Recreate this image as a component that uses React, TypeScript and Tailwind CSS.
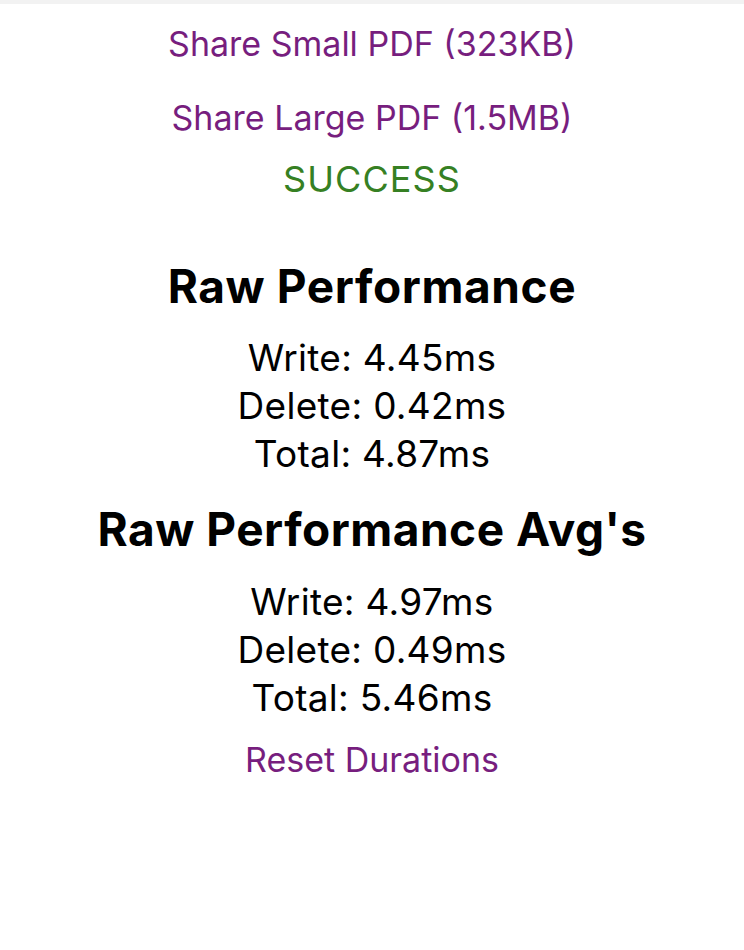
export default function App() {
  return (
    <div className="min-h-[950px] w-[744px] bg-white font-['Inter','Liberation_Sans',sans-serif] text-black">
      <div className="h-[4px] bg-[#f2f2f2]" />
      <div className="flex flex-col items-center text-center">
        <button className="mt-[16px] text-[34px] leading-[48px] text-[#771e7e]">Share Small PDF (323KB)</button>
        <button className="mt-[26px] text-[34px] leading-[48px] text-[#771e7e]">Share Large PDF (1.5MB)</button>
        <div className="mt-[13px] text-[36px] leading-[48px] tracking-[1.1px] text-[#368023]">SUCCESS</div>

        <h2 className="mt-[59px] text-[46px] font-bold leading-[48px] tracking-[0.6px]">Raw Performance</h2>
        <div className="mt-[24px] text-[37px] leading-[48px] tracking-[0.3px]">
          <div>Write: 4.45ms</div>
          <div>Delete: 0.42ms</div>
          <div>Total: 4.87ms</div>
        </div>

        <h2 className="mt-[27px] text-[46px] font-bold leading-[48px] tracking-[0.5px]">Raw Performance Avg's</h2>
        <div className="mt-[25px] text-[37px] leading-[48px] tracking-[0.3px]">
          <div>Write: 4.97ms</div>
          <div>Delete: 0.49ms</div>
          <div>Total: 5.46ms</div>
        </div>

        <button className="mt-[14px] text-[34px] leading-[48px] text-[#771e7e]">Reset Durations</button>
      </div>
    </div>
  );
}
